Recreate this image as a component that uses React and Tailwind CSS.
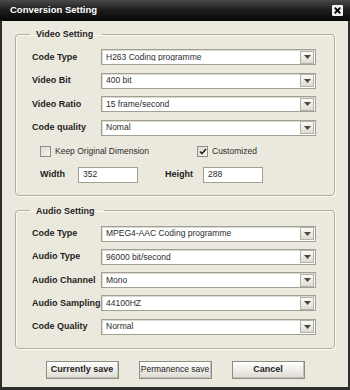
import { FiX } from 'react-icons/fi';

const font = { fontFamily: '"Liberation Sans", Arial, sans-serif' };

function Arrow() {
  return (
    <span className="flex h-[13px] w-[14px] shrink-0 items-center justify-center border border-[#b3b1a5] bg-gradient-to-b from-[#fbfbf8] to-[#dedcd2]">
      <svg width="7" height="4" viewBox="0 0 7 4">
        <path d="M0 0h7L3.5 4z" fill="#4a4a44" />
      </svg>
    </span>
  );
}

function Select({ value }) {
  return (
    <div className="flex h-[16px] w-[215px] items-center border border-[#a29f93] bg-white pl-[4px] pr-[1px] shadow-[inset_1px_1px_0_#dcdad0]">
      <span className="flex-1 truncate text-[8.5px] leading-none text-[#2c2c2c]">{value}</span>
      <Arrow />
    </div>
  );
}

function Row({ label, value }) {
  return (
    <div className="flex h-[16px] items-center">
      <span className="w-[69px] shrink-0 text-[9px] font-bold leading-none text-[#1e1e1e]">{label}</span>
      <Select value={value} />
    </div>
  );
}

function Check({ checked, label }) {
  return (
    <label className="flex items-center gap-[4px]">
      <span className="flex h-[11px] w-[11px] items-center justify-center border border-[#8f8d84] bg-gradient-to-br from-[#dcdcd6] to-[#f4f4f0]">
        {checked && (
          <svg width="8" height="7" viewBox="0 0 8 7">
            <path d="M1 3.5l2 2L7 1" stroke="#222" strokeWidth="1.6" fill="none" />
          </svg>
        )}
      </span>
      <span className="text-[8.5px] leading-none text-[#2c2c2c]">{label}</span>
    </label>
  );
}

function Button({ children, bold }) {
  return (
    <button
      type="button"
      className={`flex h-[18px] w-[73px] items-center justify-center border border-[#8e8c84] bg-gradient-to-b from-[#ffffff] to-[#dddbd2] text-[#1e1e1e] shadow-[inset_-1px_-1px_0_#c4c2b8] ${
        bold ? 'text-[9px] font-bold' : 'text-[8.5px]'
      }`}
    >
      {children}
    </button>
  );
}

export default function App() {
  return (
    <div style={font} className="flex h-[390px] w-[350px] flex-col bg-[#2e2e2e] px-[2px] pb-[3px]">
      {/* title bar */}
      <div className="-mx-[2px] flex h-[21px] shrink-0 items-center justify-between bg-gradient-to-b from-[#4a4a4a] via-[#1c1c1c] to-[#080808] pl-[10px] pr-[7px]">
        <span className="text-[9.5px] font-bold text-white">Conversion Setting</span>
        <span className="flex h-[11px] w-[11px] items-center justify-center rounded-[1px] bg-[#f2f2f2] text-black">
          <FiX strokeWidth={5} className="h-[9px] w-[9px]" />
        </span>
      </div>

      <div className="flex flex-1 flex-col overflow-hidden bg-[#ebe9dd] pt-[7px]">
        <fieldset className="mx-[13px] rounded-[4px] border border-[#b0aea0] px-0 pb-[12px] shadow-[inset_1px_1px_0_#fbfaf5,1px_1px_0_#fbfaf5]">
          <legend className="ml-[14px] h-[12px] pl-[6px] pr-[9px] text-[9px] font-bold leading-[12px] text-[#1e1e1e]">
            Video Setting
          </legend>
          <div className="flex flex-col gap-[7.5px] pl-[16px] pr-[18px] pt-[9px]">
            <Row label="Code Type" value="H263 Coding programme" />
            <Row label="Video Bit" value="400 bit" />
            <Row label="Video Ratio" value="15 frame/second" />
            <Row label="Code quality" value="Nomal" />
            <div className="flex h-[16px] items-center pl-[8px]">
              <div className="w-[157px]">
                <Check label="Keep Original Dimension" />
              </div>
              <Check checked label="Customized" />
            </div>
            <div className="flex h-[16px] items-center pl-[8px]">
              <span className="w-[38px] text-[9px] font-bold leading-none text-[#1e1e1e]">Width</span>
              <div className="flex h-[16px] w-[60px] items-center border border-[#a29f93] bg-white pl-[4px] text-[8.5px] leading-none text-[#2c2c2c]">
                352
              </div>
              <span className="ml-[27px] w-[38px] text-[9px] font-bold leading-none text-[#1e1e1e]">Height</span>
              <div className="flex h-[16px] w-[60px] items-center border border-[#a29f93] bg-white pl-[4px] text-[8.5px] leading-none text-[#2c2c2c]">
                288
              </div>
            </div>
          </div>
        </fieldset>

        <fieldset className="mx-[13px] mt-[9px] rounded-[4px] border border-[#b0aea0] px-0 pb-[13px] shadow-[inset_1px_1px_0_#fbfaf5,1px_1px_0_#fbfaf5]">
          <legend className="ml-[14px] h-[12px] pl-[6px] pr-[9px] text-[9px] font-bold leading-[12px] text-[#1e1e1e]">
            Audio Setting
          </legend>
          <div className="flex flex-col gap-[7.3px] pl-[16px] pr-[18px] pt-[9px]">
            <Row label="Code Type" value="MPEG4-AAC Coding programme" />
            <Row label="Audio Type" value="96000 bit/second" />
            <Row label="Audio Channel" value="Mono" />
            <Row label="Audio Sampling" value="44100HZ" />
            <Row label="Code Quality" value="Normal" />
          </div>
        </fieldset>

        <div className="mt-[12px] flex justify-center gap-[20px]">
          <Button bold>Currently save</Button>
          <Button>Permanence save</Button>
          <Button bold>Cancel</Button>
        </div>
      </div>
    </div>
  );
}
